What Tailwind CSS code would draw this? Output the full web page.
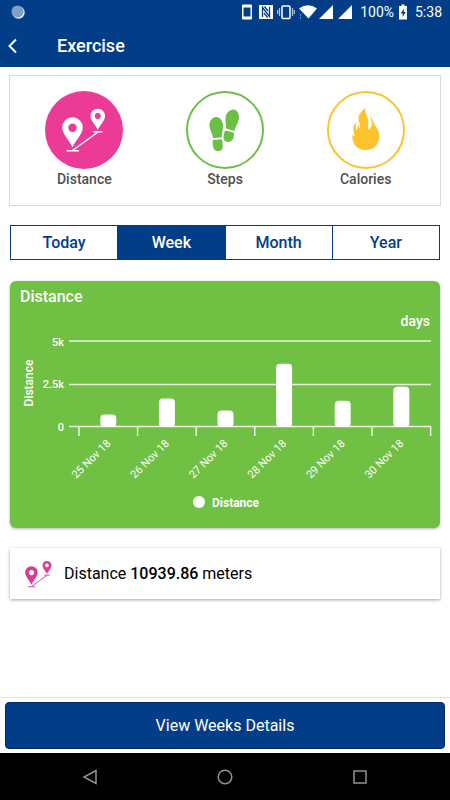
<!DOCTYPE html>
<html lang="en">
  <head>
    <meta charset="UTF-8" />
    <meta name="viewport" content="width=device-width, initial-scale=1.0" />
    <script src="https://cdn.jsdelivr.net/npm/@tailwindcss/browser@4"></script>
    <title>Exercise</title>
  </head>
  <body class="min-h-screen flex flex-col bg-white font-['Roboto',sans-serif]">
    <!-- Shared icon -->
    <svg class="hidden">
      <symbol id="icon-distance" viewBox="0 0 44 46">
        <g fill="currentColor" fill-rule="evenodd">
          <path d="M10.500 40.500C8 34 .2 27 .2 20.500a10.300 10.300 0 0 1 20.600 0C20.800 27 13 34 10.500 40.500ZM10.500 16.500a4.200 4.200 0 1 0 0 8.400 4.200 4.200 0 0 0 0-8.400Z" />
          <path d="M35.800 23C34 18.500 28.500 13.500 28.500 9a7.300 7.300 0 0 1 14.600 0C43.100 13.500 37.600 18.500 35.800 23ZM35.800 6a3 3 0 1 0 0 6 3 3 0 0 0 0-6Z" />
        </g>
        <path d="M4.500 43.800h12.500M31.500 24.800h9M10.500 43.500L36 25" fill="none" stroke="currentColor" stroke-width="1.500" />
      </symbol>
    </svg>

    <header class="bg-[#023e87] text-white">
      <!-- Status bar -->
      <div class="h-6 flex items-center justify-between pl-[11px] pr-2 text-sm">
        <svg class="size-3.5" viewBox="0 0 14 14">
          <circle cx="7.500" cy="7.500" r="6.200" fill="#e4edf5" />
          <circle cx="6.500" cy="6.500" r="6" fill="#7f9fc9" />
        </svg>
        <div class="flex items-center">
          <svg class="w-[10px] h-4 mr-[7px]" viewBox="0 0 10 16">
            <path fill="#fff" fill-rule="evenodd" d="M1 .500h8q1 0 1 1v13q0 1-1 1H1q-1 0-1-1v-13q0-1 1-1ZM1.500 3.500v9h7v-9Z" />
          </svg>
          <svg class="w-[14px] h-4 mr-1" viewBox="0 0 14 16">
            <path fill="#fff" d="M0 1h14v14H0Z" />
            <path fill="none" stroke="#023e87" stroke-width="1.300" d="M3.500 13V3.500L10.500 12.500V3M5.500 2.500L9 7M5 9L8.500 13.500" />
          </svg>
          <svg class="w-[18px] h-4 mr-1" viewBox="0 0 18 16" fill="none" stroke="#fff">
            <rect x="5" y="2" width="8" height="12.500" rx="1" stroke-width="1.500" />
            <path d="M2.500 4v8M.700 6v4M15.500 4v8M17.300 6v4" stroke-width="1.200" opacity=".7" />
          </svg>
          <svg class="w-[18px] h-4 mr-0.5" viewBox="0 0 18 16">
            <path fill="#fff" d="M0 4.500Q9-2 18 4.500L9.500 14.500Z" />
            <path stroke="#8ba9cf" d="M1.500 10v1.500M1.500 13v1.500" />
          </svg>
          <svg class="w-[14px] h-4 mr-[5px]" viewBox="0 0 14 16"><path fill="#fff" d="M14 1v14H0Z" /></svg>
          <svg class="w-[14px] h-4 mr-2" viewBox="0 0 14 16"><path fill="#fff" d="M14 1v14H0Z" /></svg>
          <span>100%</span>
          <svg class="w-2 h-4 ml-[5px] mr-2" viewBox="0 0 8 16">
            <path fill="#fff" d="M2.500.500h3V2H8v13.500H0V2h2.500Z" />
            <path fill="#023e87" d="M4.800 4.500L1.700 9.500h2v3.500l3-5h-1.900Z" />
          </svg>
          <span>5:38</span>
        </div>
      </div>
      <!-- Toolbar -->
      <div class="h-[43px] flex items-center pl-[7px]">
        <button class="w-[50px]" aria-label="Back">
          <svg class="w-3 h-4" viewBox="0 0 12 16">
            <path fill="none" stroke="#fff" stroke-width="2" d="M9 1.500L2.500 8 9 14.500" />
          </svg>
        </button>
        <h1 class="text-lg font-medium">Exercise</h1>
      </div>
    </header>

    <main class="flex-1 px-2.5 pt-2">
      <!-- Exercise types -->
      <div class="flex h-[131px] -mx-px pt-[15px] px-1 border border-[#d6dae2] text-sm font-medium text-[#505050]">
        <button class="flex-1 flex flex-col items-center">
          <span class="size-[78px] rounded-full bg-[#ec3a97] text-white flex items-center justify-center">
            <svg class="w-[44px] h-[46px]"><use href="#icon-distance" /></svg>
          </span>
          Distance
        </button>
        <button class="flex-1 flex flex-col items-center">
          <svg class="size-[78px]" viewBox="0 0 78 78" fill="#6ac045">
            <circle cx="39" cy="39" r="38" fill="none" stroke="#6ac045" stroke-width="2" />
            <path d="M27 47C26.500 42 23.500 39 23.500 34.500C23.500 29.500 26.500 26 30.300 26S37 30 37 35C37 40 35.500 42 35.800 46.500Z" />
            <path d="M26.800 49L36 48.300C36.500 51 37 53.500 36.700 56C36.500 59 34.500 60.200 32 60.200C28 60.200 26.300 56.500 26.800 49Z" />
            <path d="M40 37.500C40.500 33 39 31 39.500 27C40 22 43.500 18.500 47.500 18.500C51.500 18.500 53.500 23 52.800 28C52 33 49.500 35 48.300 40Z" />
            <path d="M39.300 39.500L48 41.700C48 47 46.500 51 42.300 51C36.500 51 36.500 44.500 39.300 39.500Z" />
          </svg>
          Steps
        </button>
        <button class="flex-1 flex flex-col items-center">
          <svg class="size-[78px]" viewBox="0 0 78 78">
            <circle cx="39" cy="39" r="38" fill="none" stroke="#fcc32d" stroke-width="2" />
            <path fill="#fcc32d" d="M38.500 16.500C36.500 19 32 22 31.500 27C31.300 31 33.500 33 33 37.500C31.800 37 31.800 35.500 32 33.500C30.500 35 30.200 37 30.200 39.500C28.500 37.500 28.500 35 29.500 31.500C26.500 33.500 26 37 26.500 40C27 42.500 27.500 44 27.300 45.500C26 45 25.500 44 25.300 42.500C24.500 53 30 59 38.700 59C47 59 52.300 53 52.300 45.500C52.300 36.500 45 33 43.500 23C42.800 27 45.500 31 44.500 34.500C44 36.500 43 37 42.500 39C41 38 41 36.500 41.300 34.500C42.500 26.500 37 23 38.500 16.500Z" />
          </svg>
          Calories
        </button>
      </div>

      <!-- Period tabs -->
      <div class="mt-[19px] h-[35px] flex border border-[#023e87] divide-x divide-[#023e87] font-medium text-[#023e87]">
        <button class="flex-1">Today</button>
        <button class="flex-1 bg-[#023e87] text-white">Week</button>
        <button class="flex-1">Month</button>
        <button class="flex-1">Year</button>
      </div>

      <!-- Distance chart -->
      <section class="mt-[21px] pt-1 pb-[11px] rounded-md bg-[#70c044] text-white font-medium shadow-[0_1px_3px_rgba(0,0,0,0.3)]">
        <h2 class="px-2.5 text-base">Distance</h2>
        <p class="px-2.5 text-sm leading-6 text-right">days</p>
        <svg class="w-full" viewBox="0 0 430 184" fill="#fff">
          <g stroke="#e8f6e0" stroke-width="1.500">
            <path d="M59 8H421M59 51.500H421M59 93.500H421" />
            <path id="ticks" />
          </g>
          <g font-size="11" text-anchor="end">
            <text x="54" y="13">5k</text>
            <text x="54" y="55">2.5k</text>
            <text x="54" y="98">0</text>
          </g>
          <text x="23" y="50" font-size="12" text-anchor="middle" transform="rotate(-90 23 50)">Distance</text>
          <g id="bars"></g>
          <circle cx="189" cy="169" r="6" />
          <text x="202" y="174" font-size="12" font-weight="700">Distance</text>
        </svg>
      </section>

      <!-- Total -->
      <section class="mt-5 h-[51px] pl-[15px] pr-4 flex items-center gap-3 bg-white shadow-[0_1px_3px_rgba(0,0,0,0.35)]">
        <svg class="w-[27px] h-8 text-[#dd3b93]"><use href="#icon-distance" /></svg>
        <p class="text-base">Distance <b class="font-medium">10939.86</b> meters</p>
      </section>
    </main>

    <footer class="border-t border-[#e2e4e7] px-[5px] py-1">
      <button class="w-full h-[47px] rounded-sm border border-[#022a68] bg-[#023e87] text-base text-white">View Weeks Details</button>
    </footer>

    <nav class="h-[47px] px-[82px] flex items-center justify-between bg-black">
      <button aria-label="Back">
        <svg class="size-4" viewBox="0 0 16 16" fill="none" stroke="#929292" stroke-width="1.500"><path d="M14 1.500v13L2 8Z" /></svg>
      </button>
      <button aria-label="Home">
        <svg class="size-4" viewBox="0 0 16 16" fill="none" stroke="#929292" stroke-width="1.500"><circle cx="8" cy="8" r="6.800" /></svg>
      </button>
      <button aria-label="Recent apps">
        <svg class="size-4" viewBox="0 0 16 16" fill="none" stroke="#929292" stroke-width="1.500"><rect x="2" y="2" width="12" height="12" /></svg>
      </button>
    </nav>

    <script>
      // Distance per day in meters
      const days = [
        { date: "25 Nov 18", distance: 740 },
        { date: "26 Nov 18", distance: 1680 },
        { date: "27 Nov 18", distance: 970 },
        { date: "28 Nov 18", distance: 3720 },
        { date: "29 Nov 18", distance: 1540 },
        { date: "30 Nov 18", distance: 2370 },
      ];
      const left = 69;
      const step = 58.6;
      const base = 94;

      // Ticks between the days
      let ticks = "";
      for (let i = 0; i <= days.length; i++) {
        ticks += `M${left + i * step} ${base}v9`;
      }
      document.getElementById("ticks").setAttribute("d", ticks);

      // Bars and date labels
      document.getElementById("bars").innerHTML = days
        .map((d, i) => {
          const x = left + (i + 0.5) * step;
          const h = (d.distance / 5000) * 85;
          return `
            <rect x="${x - 8}" y="${base - h}" width="16" height="${h}" rx="4" />
            <text x="${x + 3}" y="111" font-size="11" font-weight="400" text-anchor="end" transform="rotate(-45 ${x + 3} 111)">${d.date}</text>
          `;
        })
        .join("");
    </script>
  </body>
</html>
